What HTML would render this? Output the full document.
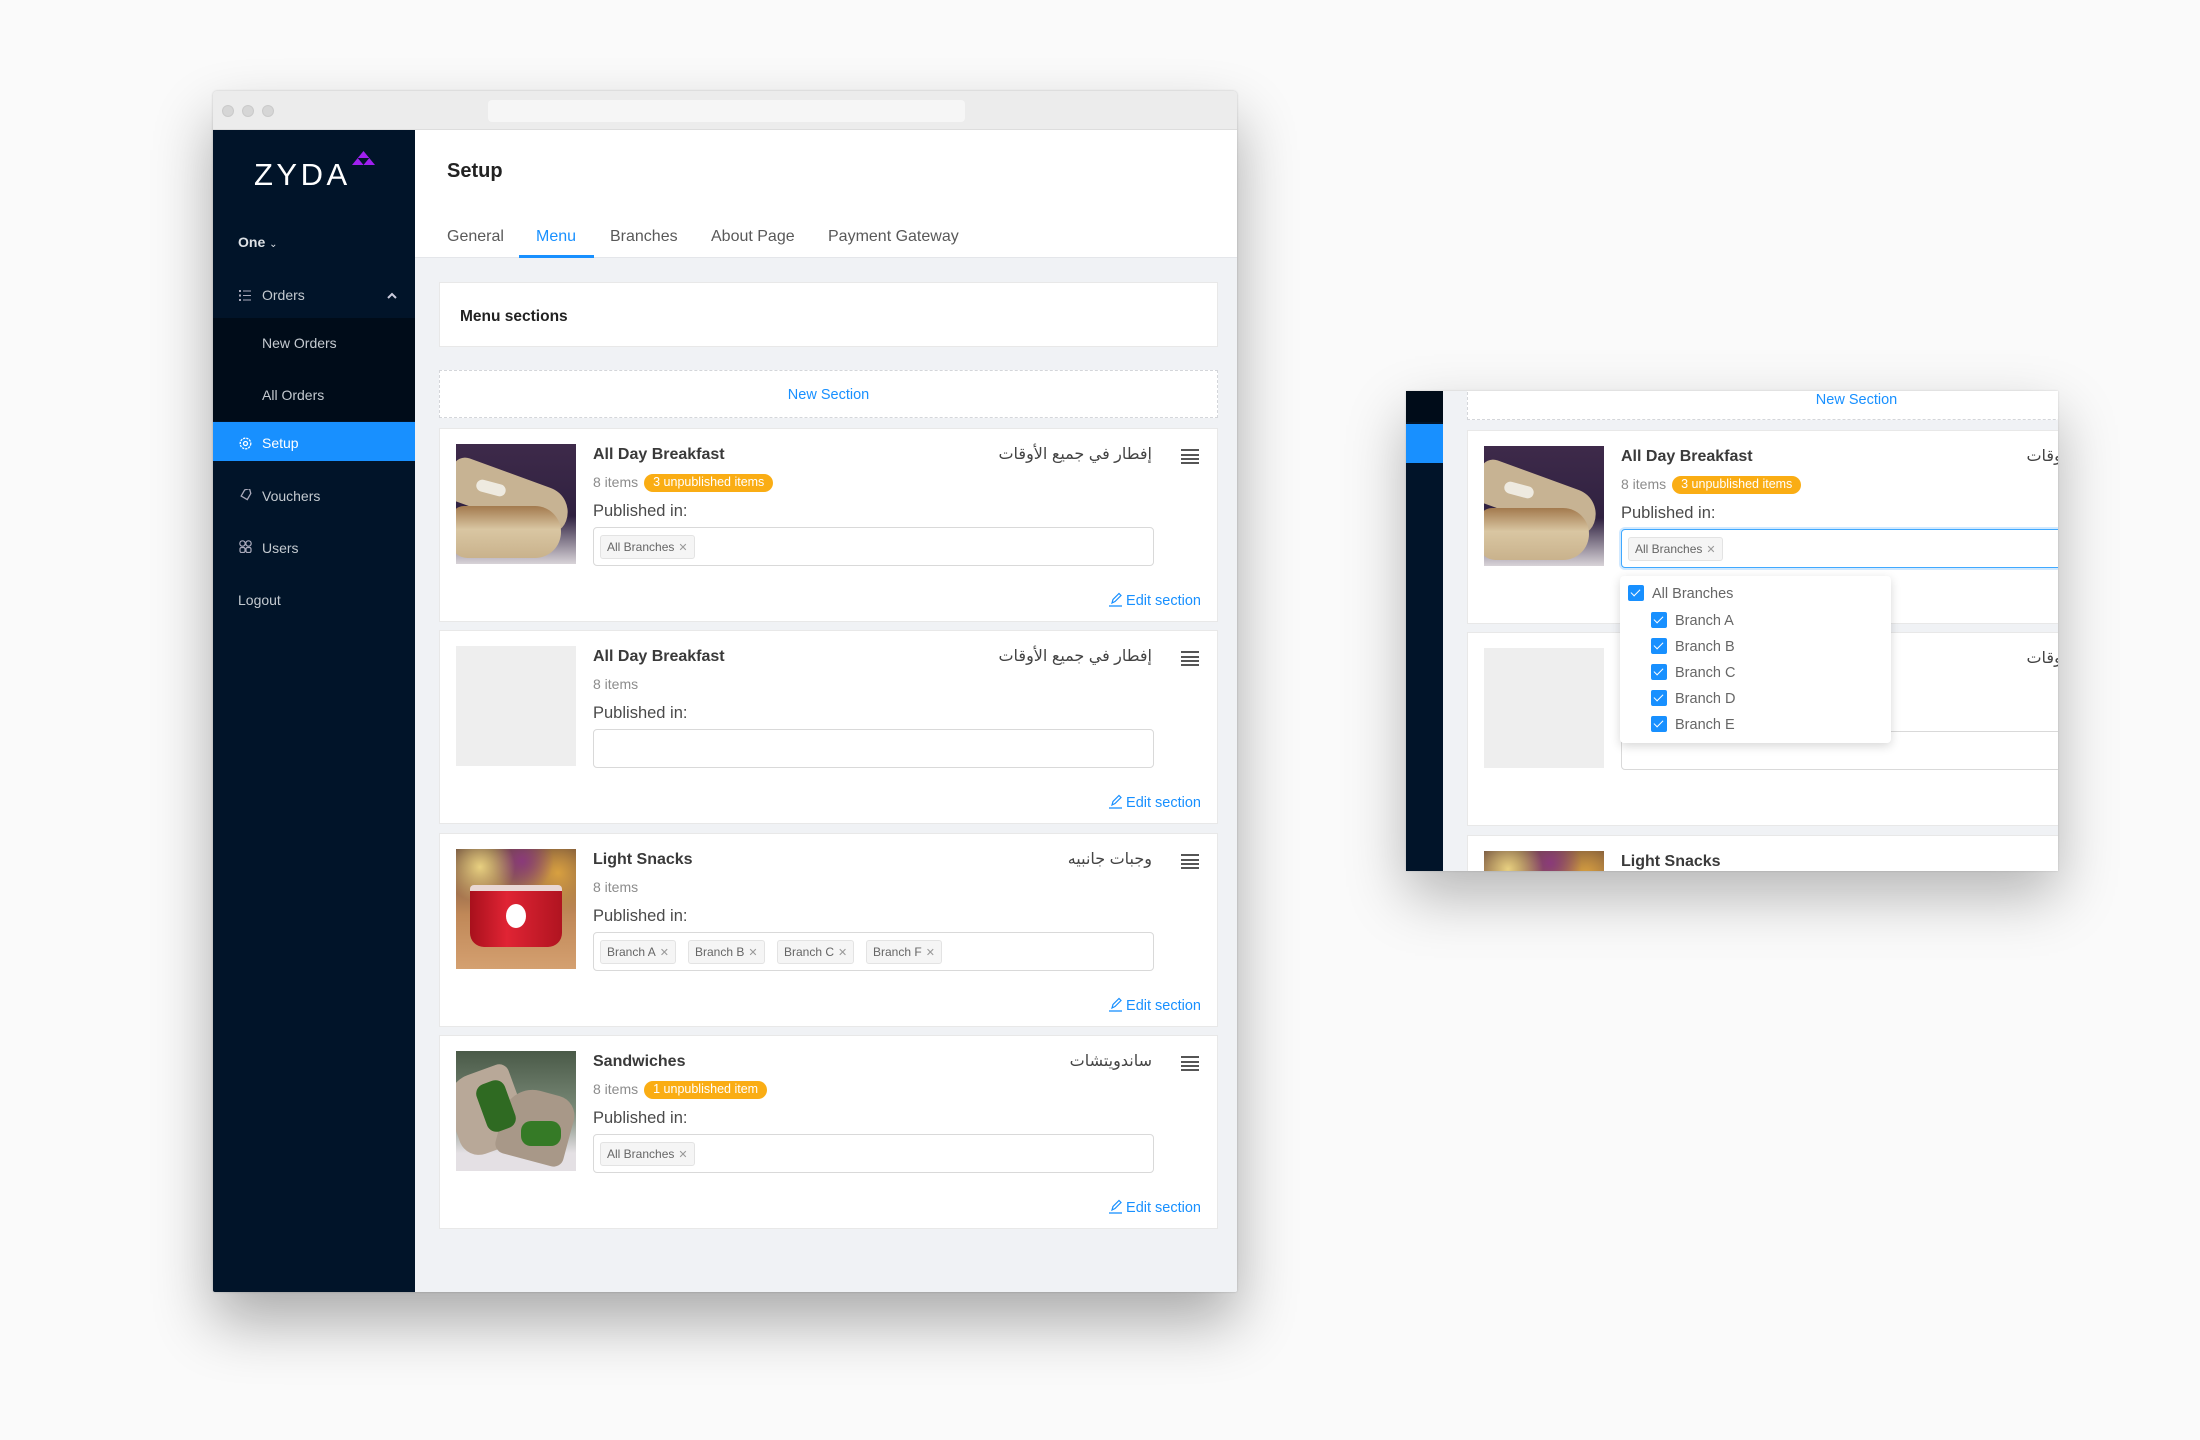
<!DOCTYPE html>
<html><head><meta charset="utf-8">
<style>
*{margin:0;padding:0;box-sizing:border-box}
body{width:2200px;height:1440px;background:#fafafa;font-family:"Liberation Sans",Arial,sans-serif;position:relative;overflow:hidden}
.win{position:absolute;left:213px;top:91px;width:1024px;height:1201px;background:#f0f2f5;box-shadow:0 30px 60px rgba(0,0,0,.32),0 0 2px rgba(0,0,0,.2);border-radius:4px 4px 2px 2px;overflow:hidden}
.tb{position:absolute;left:0;top:0;width:1024px;height:39px;background:#ececec;border-bottom:1px solid #ddd}
.dot{position:absolute;top:14px;width:12px;height:12px;border-radius:50%;background:#d6d6d6;border:1px solid #cacaca}
.addr{position:absolute;left:275px;top:9px;width:477px;height:22px;background:#f6f6f6;border-radius:4px}
.sb{position:absolute;left:0;top:39px;width:202px;height:1162px;background:#011429;color:#c4cad0;font-size:14px}
.sb .t{position:absolute;white-space:nowrap}
.sub{position:absolute;left:0;top:188px;width:202px;height:103px;background:#000c19}
.act{position:absolute;left:0;top:292px;width:202px;height:39px;background:#1890ff}
.ct{position:absolute;width:822px;height:1162px;background:#f0f2f5}
.hd{position:absolute;left:0;top:0;width:822px;height:128px;background:#fff;border-bottom:1px solid #e4e6ea}
.h1{position:absolute;left:32px;top:30px;font-size:20px;font-weight:bold;color:#222}
.tab{position:absolute;top:98px;font-size:16px;color:#595959;white-space:nowrap}
.ul{position:absolute;left:104px;top:125px;width:75px;height:3px;background:#1890ff}
.box{position:absolute;left:24px;width:779px;background:#fff;border:1px solid #e8e8e8}
.card{height:194px}
.img{position:absolute;left:16px;top:15px;width:120px;height:120px;overflow:hidden;background:#eee}
.ttl{position:absolute;left:153px;top:16px;font-size:16px;font-weight:bold;color:#3a3a3a;line-height:20px;white-space:nowrap}
.its{position:absolute;left:153px;top:44px;font-size:14px;color:#8c8c8c;line-height:18px;white-space:nowrap}
.bdg{display:inline-block;margin-left:6px;background:#faad14;color:#fff;font-size:12.5px;line-height:17px;height:18px;padding:0 9px;border-radius:9px;vertical-align:1px}
.pub{position:absolute;left:153px;top:72px;font-size:16.5px;color:#4a4a4a;line-height:20px}
.inp{position:absolute;left:153px;top:98px;width:561px;height:39px;border:1px solid #d9d9d9;border-radius:4px;background:#fff}
.chip{position:absolute;top:7px;height:24px;line-height:22px;border:1px solid #e3e3e3;background:#f5f5f5;border-radius:3px;font-size:12px;color:#666;padding:0 6px;white-space:nowrap}
.chip i{font-style:normal;color:#999;margin-left:4px;font-size:11px}
.ar{position:absolute;right:65px;top:15px;font-size:16px;color:#444;font-family:"Liberation Sans","DejaVu Sans",sans-serif;direction:rtl;white-space:nowrap;line-height:22px}
.hb{position:absolute;right:18px;top:20px;width:18px;height:15px;border-top:2px solid #555;border-bottom:2px solid #555}
.hb:before,.hb:after{content:"";position:absolute;left:0;width:18px;height:2px;background:#555}
.hb:before{top:2.5px}.hb:after{top:6.5px}
.ed{position:absolute;right:16px;top:163px;font-size:14.5px;color:#1890ff;white-space:nowrap;line-height:18px}
.ed svg{vertical-align:-2px;margin-right:4px}
.w2{position:absolute;left:1406px;top:391px;width:652px;height:480px;overflow:hidden;background:#f0f2f5;box-shadow:0 25px 55px rgba(0,0,0,.28),0 0 2px rgba(0,0,0,.15)}
.dd{position:absolute;left:214px;top:185px;width:271px;height:167px;background:#fff;border-radius:4px;box-shadow:0 3px 10px rgba(0,0,0,.16);font-size:14.5px;color:#666}
.dd .r{position:absolute;white-space:nowrap;line-height:18px}
.cb{display:inline-block;width:16px;height:16px;background:#1890ff;border-radius:2px;vertical-align:-3px;margin-right:8px;position:relative}
.cb:after{content:"";position:absolute;left:5px;top:2px;width:4px;height:8px;border:solid #fff;border-width:0 1.5px 1.5px 0;transform:rotate(45deg)}
</style></head><body>

<div class="win">
  <div class="tb"><div class="dot" style="left:9px"></div><div class="dot" style="left:29px"></div><div class="dot" style="left:49px"></div><div class="addr"></div></div>
  <div class="sb">
    <div class="t" style="left:41px;top:27px;font-size:31px;color:#fff;letter-spacing:3.5px">ZYDA</div>
    <svg style="position:absolute;left:139px;top:21px" width="23" height="14" viewBox="0 0 23 14"><polygon points="11.5,0 23,14 0,14" fill="#a020f0"/><polygon points="5.75,7 17.25,7 11.5,14" fill="#011429"/></svg>
    <div class="t" style="left:25px;top:104px;font-weight:bold;color:#dde1e5">One <span style="font-weight:normal;font-size:10px">&#8964;</span></div>
    <svg style="position:absolute;left:26px;top:160px" width="12" height="11" viewBox="0 0 12 11" fill="#aab"><rect x="0" y="0" width="2" height="2"/><rect x="0" y="4.5" width="2" height="2"/><rect x="0" y="9" width="2" height="2"/><rect x="4" y="0.5" width="8" height="1"/><rect x="4" y="5" width="8" height="1"/><rect x="4" y="9.5" width="8" height="1"/></svg>
    <div class="t" style="left:49px;top:157px">Orders</div>
    <svg style="position:absolute;left:174px;top:162px" width="10" height="7" viewBox="0 0 10 7"><polyline points="1,6 5,2 9,6" fill="none" stroke="#ccd" stroke-width="2"/></svg>
    <div class="sub"></div>
    <div class="t" style="left:49px;top:205px">New Orders</div>
    <div class="t" style="left:49px;top:257px">All Orders</div>
    <div class="act"></div>
    <svg style="position:absolute;left:26px;top:307px" width="13" height="13" viewBox="0 0 13 13"><circle cx="6.5" cy="6.5" r="5.3" fill="none" stroke="#fff" stroke-width="1.3" stroke-dasharray="2.2 1"/><circle cx="6.5" cy="6.5" r="2" fill="none" stroke="#fff" stroke-width="1.3"/></svg>
    <div class="t" style="left:49px;top:305px;color:#fff">Setup</div>
    <svg style="position:absolute;left:26px;top:359px" width="13" height="12" viewBox="0 0 13 12"><path d="M2 6 L7 1 H12 V6 L7 11 Z" fill="none" stroke="#aab" stroke-width="1.3" transform="rotate(-15 6 6)"/></svg>
    <div class="t" style="left:49px;top:358px">Vouchers</div>
    <svg style="position:absolute;left:26px;top:410px" width="13" height="13" viewBox="0 0 13 13" fill="none" stroke="#aab" stroke-width="1.2"><circle cx="3.5" cy="3.5" r="2.7"/><circle cx="9.5" cy="3.5" r="2.7"/><rect x="1" y="7.5" width="5" height="5" rx="1.5"/><rect x="7" y="7.5" width="5" height="5" rx="1.5"/></svg>
    <div class="t" style="left:49px;top:410px">Users</div>
    <div class="t" style="left:25px;top:462px">Logout</div>
  </div>

  <div class="ct" style="left:202px;top:39px">
    <div class="hd">
      <div class="h1">Setup</div>
      <div class="tab" style="left:32px">General</div>
      <div class="tab" style="left:121px;color:#1890ff">Menu</div>
      <div class="tab" style="left:195px">Branches</div>
      <div class="tab" style="left:296px">About Page</div>
      <div class="tab" style="left:413px">Payment Gateway</div>
      <div class="ul"></div>
    </div>
    <div class="box" style="top:152px;height:65px"><div style="position:absolute;left:20px;top:25px;font-size:15.5px;font-weight:bold;color:#222">Menu sections</div></div>
    <div class="box" style="top:240px;height:48px;border:1px dashed #d4d6da"><div style="position:absolute;left:0;width:100%;top:16px;text-align:center;font-size:14.5px;color:#1890ff">New Section</div></div>

    <div class="box card" style="top:298px">
      <div class="img" style="background:linear-gradient(#3e2a4a,#2f2140 60%,#d8d3d8)">
        <div style="position:absolute;left:-10px;top:30px;width:125px;height:45px;background:#c7b393;border-radius:20px 40px 30px 20px;transform:rotate(20deg)"></div>
        <div style="position:absolute;left:-5px;top:62px;width:110px;height:52px;background:linear-gradient(#a37a4e,#d9c6a2 45%,#c9b28c);border-radius:20px 40px 40px 25px"></div>
        <div style="position:absolute;left:20px;top:38px;width:30px;height:12px;background:#eeeae0;border-radius:6px;transform:rotate(15deg)"></div>
      </div>
      <div class="ttl">All Day Breakfast</div>
      <div class="its">8 items<span class="bdg">3 unpublished items</span></div>
      <div class="pub">Published in:</div>
      <div class="inp"><div class="chip" style="left:6px">All Branches<i>✕</i></div></div>
      <div class="ar">إفطار في جميع الأوقات</div><div class="hb"></div>
      <div class="ed"><svg width="13" height="15" viewBox="0 0 13 15"><path d="M3 11 L4 7.5 L10 1.5 L12 3.5 L6 9.5 Z" fill="none" stroke="#1890ff" stroke-width="1.2"/><line x1="0" y1="14" x2="13" y2="14" stroke="#1890ff" stroke-width="1.3"/></svg>Edit section</div>
    </div>

    <div class="box card" style="top:500px">
      <div class="img" style="background:#eeeeee"></div>
      <div class="ttl">All Day Breakfast</div>
      <div class="its">8 items</div>
      <div class="pub">Published in:</div>
      <div class="inp"></div>
      <div class="ar">إفطار في جميع الأوقات</div><div class="hb"></div>
      <div class="ed"><svg width="13" height="15" viewBox="0 0 13 15"><path d="M3 11 L4 7.5 L10 1.5 L12 3.5 L6 9.5 Z" fill="none" stroke="#1890ff" stroke-width="1.2"/><line x1="0" y1="14" x2="13" y2="14" stroke="#1890ff" stroke-width="1.3"/></svg>Edit section</div>
    </div>

    <div class="box card" style="top:703px">
      <div class="img" style="background:radial-gradient(circle at 20% 15%,#e8d080 0,transparent 25%),radial-gradient(circle at 55% 10%,#8a3a7a 0,transparent 25%),radial-gradient(circle at 85% 20%,#d8a040 0,transparent 30%),linear-gradient(#6a4a3a,#c08858 55%,#d4a070)">
        <div style="position:absolute;left:14px;top:36px;width:92px;height:62px;background:linear-gradient(90deg,#a8101c,#e02434 40%,#b01420);border-radius:4px 4px 14px 14px;border-top:6px solid #e9d7d4"></div>
        <div style="position:absolute;left:50px;top:55px;width:20px;height:24px;background:#fff;border-radius:50%"></div>
      </div>
      <div class="ttl">Light Snacks</div>
      <div class="its">8 items</div>
      <div class="pub">Published in:</div>
      <div class="inp">
        <div class="chip" style="left:6px">Branch A<i>✕</i></div>
        <div class="chip" style="left:94px">Branch B<i>✕</i></div>
        <div class="chip" style="left:183px">Branch C<i>✕</i></div>
        <div class="chip" style="left:272px">Branch F<i>✕</i></div>
      </div>
      <div class="ar">وجبات جانبيه</div><div class="hb"></div>
      <div class="ed"><svg width="13" height="15" viewBox="0 0 13 15"><path d="M3 11 L4 7.5 L10 1.5 L12 3.5 L6 9.5 Z" fill="none" stroke="#1890ff" stroke-width="1.2"/><line x1="0" y1="14" x2="13" y2="14" stroke="#1890ff" stroke-width="1.3"/></svg>Edit section</div>
    </div>

    <div class="box card" style="top:905px">
      <div class="img" style="background:linear-gradient(#4a5a48,#7a8a78 50%,#e4e0e4 85%)">
        <div style="position:absolute;left:-5px;top:20px;width:70px;height:80px;background:#b8a898;border-radius:30px 10px 10px 20px;transform:rotate(-20deg)"></div>
        <div style="position:absolute;left:45px;top:40px;width:70px;height:70px;background:#a89888;border-radius:30px 20px 10px 10px;transform:rotate(15deg)"></div>
        <div style="position:absolute;left:25px;top:30px;width:30px;height:50px;background:#2f6a22;border-radius:10px;transform:rotate(-20deg)"></div>
        <div style="position:absolute;left:65px;top:70px;width:40px;height:25px;background:#357a26;border-radius:10px"></div>
      </div>
      <div class="ttl">Sandwiches</div>
      <div class="its">8 items<span class="bdg">1 unpublished item</span></div>
      <div class="pub">Published in:</div>
      <div class="inp"><div class="chip" style="left:6px">All Branches<i>✕</i></div></div>
      <div class="ar">ساندويتشات</div><div class="hb"></div>
      <div class="ed"><svg width="13" height="15" viewBox="0 0 13 15"><path d="M3 11 L4 7.5 L10 1.5 L12 3.5 L6 9.5 Z" fill="none" stroke="#1890ff" stroke-width="1.2"/><line x1="0" y1="14" x2="13" y2="14" stroke="#1890ff" stroke-width="1.3"/></svg>Edit section</div>
    </div>
  </div>
</div>

<div class="w2">
  <div style="position:absolute;left:0;top:0;width:37px;height:480px;background:#011429"></div>
  <div style="position:absolute;left:0;top:0;width:37px;height:31px;background:#000c19"></div>
  <div style="position:absolute;left:0;top:33px;width:37px;height:39px;background:#1890ff"></div>
  <div class="ct" style="left:37px;top:-259px">
    <div class="box" style="top:240px;height:48px;border:1px dashed #d4d6da"><div style="position:absolute;left:0;width:100%;top:19px;text-align:center;font-size:14.5px;color:#1890ff">New Section</div></div>
    <div class="box card" style="top:298px">
      <div class="img" style="background:linear-gradient(#3e2a4a,#2f2140 60%,#d8d3d8)">
        <div style="position:absolute;left:-10px;top:30px;width:125px;height:45px;background:#c7b393;border-radius:20px 40px 30px 20px;transform:rotate(20deg)"></div>
        <div style="position:absolute;left:-5px;top:62px;width:110px;height:52px;background:linear-gradient(#a37a4e,#d9c6a2 45%,#c9b28c);border-radius:20px 40px 40px 25px"></div>
        <div style="position:absolute;left:20px;top:38px;width:30px;height:12px;background:#eeeae0;border-radius:6px;transform:rotate(15deg)"></div>
      </div>
      <div class="ttl">All Day Breakfast</div>
      <div class="its">8 items<span class="bdg">3 unpublished items</span></div>
      <div class="pub">Published in:</div>
      <div class="inp" style="border:1.5px solid #40a9ff;box-shadow:0 0 0 2px rgba(24,144,255,.2)"><div class="chip" style="left:6px">All Branches<i>✕</i></div></div>
      <div class="ar">إفطار في جميع الأوقات</div><div class="hb"></div>
    </div>
    <div class="box card" style="top:500px">
      <div class="img" style="background:#eeeeee"></div>
      <div class="ttl">All Day Breakfast</div>
      <div class="its">8 items</div>
      <div class="pub">Published in:</div>
      <div class="inp"></div>
      <div class="ar">إفطار في جميع الأوقات</div><div class="hb"></div>
    </div>
    <div class="box card" style="top:703px">
      <div class="img" style="background:radial-gradient(circle at 20% 15%,#e8d080 0,transparent 25%),radial-gradient(circle at 55% 10%,#8a3a7a 0,transparent 25%),radial-gradient(circle at 85% 20%,#d8a040 0,transparent 30%),linear-gradient(#6a4a3a,#c08858 55%,#d4a070)"></div>
      <div class="ttl">Light Snacks</div>
    </div>
  </div>
  <div class="dd">
    <div class="r" style="left:8px;top:9px"><span class="cb"></span>All Branches</div>
    <div class="r" style="left:31px;top:36px"><span class="cb"></span>Branch A</div>
    <div class="r" style="left:31px;top:62px"><span class="cb"></span>Branch B</div>
    <div class="r" style="left:31px;top:88px"><span class="cb"></span>Branch C</div>
    <div class="r" style="left:31px;top:114px"><span class="cb"></span>Branch D</div>
    <div class="r" style="left:31px;top:140px"><span class="cb"></span>Branch E</div>
  </div>
</div>
</body></html>
